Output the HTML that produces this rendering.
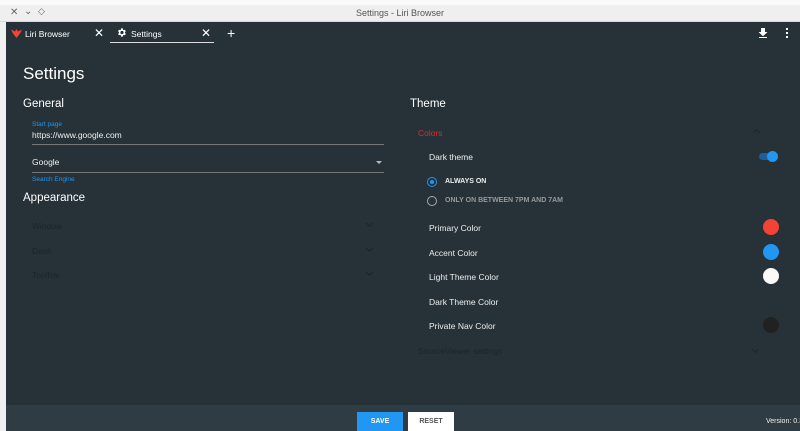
<!DOCTYPE html>
<html><head><meta charset="utf-8"><style>
*{margin:0;padding:0;box-sizing:border-box}
body{width:800px;height:431px;overflow:hidden;background:#f0f0f0;font-family:"Liberation Sans",sans-serif;position:relative}
.abs{position:absolute}
#tb{left:0;top:0;width:800px;height:22px;background:#efefef;border-top:5px solid #fafafa;border-bottom:1px solid #d8d8d8}
#win{left:6px;top:22px;width:794px;height:409px;background:#263238}
.t{position:absolute;white-space:nowrap}
#foot{left:6px;top:405px;width:794px;height:26px;background:#303c43}
.w{color:#fff}
.lbl{font-size:8.5px;color:#eee}
.dim{font-size:8.5px;color:#1b2429}
.chev{position:absolute;width:5px;height:5px;border-right:1px solid #1b2429;border-bottom:1px solid #1b2429;transform:rotate(45deg)}
</style></head><body>
<div id="tb" class="abs"></div>
<div class="t" style="left:10px;top:7px;font-size:10px;color:#666">✕</div>
<div class="t" style="left:24px;top:6px;font-size:10px;color:#666">⌄</div>
<div class="t" style="left:38px;top:6px;font-size:9px;color:#666">◇</div>
<div class="t" style="left:0;width:800px;text-align:center;top:8px;font-size:9px;color:#555">Settings - Liri Browser</div>
<div id="win" class="abs"></div>
<svg class="abs" style="left:11px;top:29px" width="11" height="9" viewBox="0 0 11 9"><path d="M0 0.5 L4 2.5 L5.5 0 L7 2.5 L11 0.5 L9 4.5 L5.5 9 L2 4.5Z" fill="#f44336"/></svg>
<div class="t w" style="left:25px;top:29px;font-size:8.5px">Liri Browser</div>
<div class="t w" style="left:94px;top:26px;font-size:12px">✕</div>
<svg class="abs" style="left:116px;top:27px" width="11" height="11" viewBox="0 0 24 24"><path fill="#fff" d="M19.4 13a7.5 7.5 0 0 0 0-2l2.1-1.6-2-3.5-2.5 1a7 7 0 0 0-1.7-1L15 3h-4l-.4 2.9a7 7 0 0 0-1.7 1l-2.5-1-2 3.5L6.6 11a7.5 7.5 0 0 0 0 2l-2.1 1.6 2 3.5 2.5-1a7 7 0 0 0 1.7 1L11 21h4l.4-2.9a7 7 0 0 0 1.7-1l2.5 1 2-3.5zM13 15.5a3.5 3.5 0 1 1 0-7 3.5 3.5 0 0 1 0 7z"/></svg>
<div class="t w" style="left:131px;top:29px;font-size:8.5px">Settings</div>
<div class="t w" style="left:201px;top:26px;font-size:12px">✕</div>
<div class="abs" style="left:110px;top:42px;width:104px;height:1px;background:#ddd"></div>
<div class="t w" style="left:227px;top:25px;font-size:14px">+</div>
<svg class="abs" style="left:758px;top:28px" width="10" height="10" viewBox="0 0 10 10"><path d="M3 0h4v4h2.5L5 8.3 0.5 4H3z M1 9h8v1H1z" fill="#fff"/></svg>
<div class="abs" style="left:786px;top:28px;width:2px;height:2px;background:#fff;box-shadow:0 4px #fff,0 8px #fff"></div>
<div class="t w" style="left:23px;top:64px;font-size:17px">Settings</div>
<div class="t w" style="left:23px;top:98px;font-size:11.5px">General</div>
<div class="t" style="left:32px;top:121px;font-size:6.5px;color:#2196f3">Start page</div>
<div class="t" style="left:32px;top:130px;font-size:8.5px;color:#eee">https://www.google.com</div>
<div class="abs" style="left:32px;top:144px;width:352px;height:1px;background:#777"></div>
<div class="t" style="left:32px;top:157px;font-size:8.5px;color:#eee">Google</div>
<div class="abs" style="left:376px;top:161px;border:3px solid transparent;border-top:3px solid #bbb"></div>
<div class="abs" style="left:32px;top:172px;width:352px;height:1px;background:#777"></div>
<div class="t" style="left:32px;top:176px;font-size:6.5px;color:#2196f3">Search Engine</div>
<div class="t w" style="left:23px;top:192px;font-size:11.5px">Appearance</div>
<div class="t dim" style="left:32px;top:221px">Window</div><div class="chev" style="left:367px;top:221px"></div>
<div class="t dim" style="left:32px;top:246px">Dash</div><div class="chev" style="left:367px;top:246px"></div>
<div class="t dim" style="left:32px;top:270px">Toolbar</div><div class="chev" style="left:367px;top:270px"></div>
<div class="t w" style="left:410px;top:98px;font-size:11.5px">Theme</div>
<div class="t" style="left:418px;top:128px;font-size:8.5px;color:#d32f2f">Colors</div>
<div class="chev" style="left:754px;top:130px;transform:rotate(225deg)"></div>
<div class="t lbl" style="left:429px;top:152px">Dark theme</div>
<div class="abs" style="left:759px;top:153px;width:18px;height:7px;border-radius:4px;background:#1c5f99"></div>
<div class="abs" style="left:767px;top:151px;width:11px;height:11px;border-radius:50%;background:#2196f3"></div>
<div class="abs" style="left:427px;top:177px;width:10px;height:10px;border-radius:50%;border:1.5px solid #2196f3"></div>
<div class="abs" style="left:430px;top:180px;width:4px;height:4px;border-radius:50%;background:#2196f3"></div>
<div class="t" style="left:445px;top:178px;font-size:7px;font-weight:bold;color:#eee">ALWAYS ON</div>
<div class="abs" style="left:427px;top:196px;width:10px;height:10px;border-radius:50%;border:1.5px solid #aaa"></div>
<div class="t" style="left:445px;top:197px;font-size:7px;font-weight:bold;color:#999">ONLY ON BETWEEN 7PM AND 7AM</div>
<div class="t lbl" style="left:429px;top:223px">Primary Color</div>
<div class="abs" style="left:763px;top:219px;width:16px;height:16px;border-radius:50%;background:#f44336"></div>
<div class="t lbl" style="left:429px;top:248px">Accent Color</div>
<div class="abs" style="left:763px;top:244px;width:16px;height:16px;border-radius:50%;background:#2196f3"></div>
<div class="t lbl" style="left:429px;top:272px">Light Theme Color</div>
<div class="abs" style="left:763px;top:268px;width:16px;height:16px;border-radius:50%;background:#fafafa"></div>
<div class="t lbl" style="left:429px;top:297px">Dark Theme Color</div>
<div class="t lbl" style="left:429px;top:321px">Private Nav Color</div>
<div class="abs" style="left:763px;top:317px;width:16px;height:16px;border-radius:50%;background:#212121"></div>
<div class="t dim" style="left:418px;top:346px">SourceViewer settings</div>
<div class="chev" style="left:753px;top:347px"></div>
<div id="foot" class="abs"></div>
<div class="abs" style="left:357px;top:412px;width:46px;height:19px;background:#2196f3;color:#fff;font-size:7px;font-weight:bold;text-align:center;line-height:19px">SAVE</div>
<div class="abs" style="left:408px;top:412px;width:46px;height:19px;background:#fff;color:#555;font-size:7px;font-weight:bold;text-align:center;line-height:19px">RESET</div>
<div class="t" style="left:766px;top:418px;font-size:7px;color:#eee">Version: 0.3</div>
</body></html>
